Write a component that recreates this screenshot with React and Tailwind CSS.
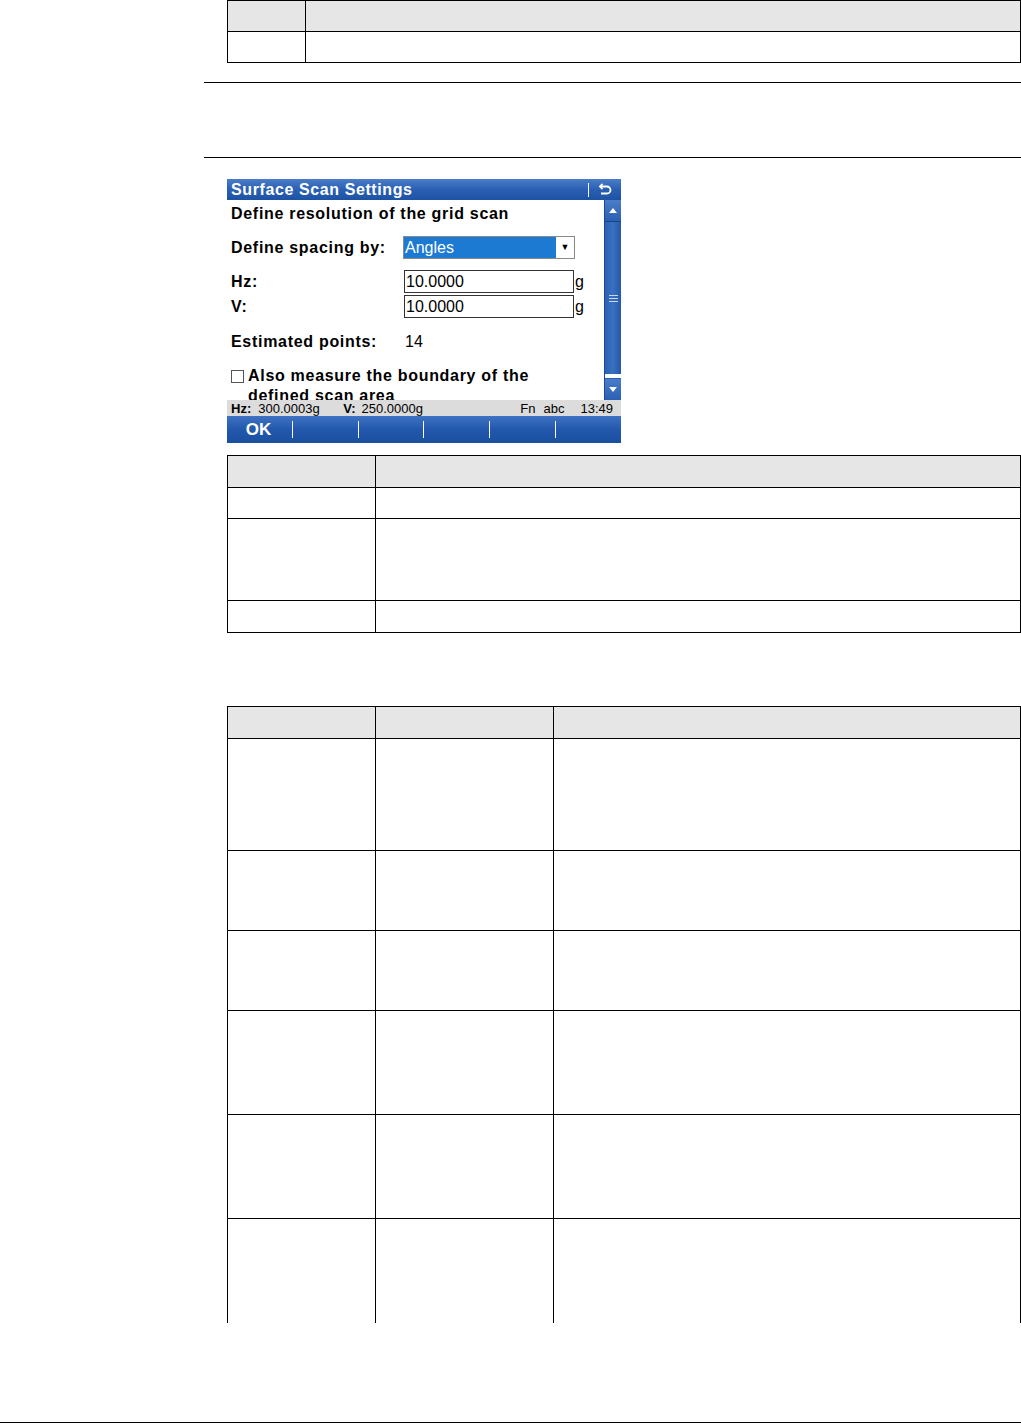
import React from "react";

const tahoma = { fontFamily: '"Liberation Sans", Arial, sans-serif' };

// a document table: left/top border on the box, right/bottom on every cell
const DocTable = ({ cols, rows, openBottom }) => (
  <div className="ml-[227px] w-[794px] border-l border-t border-black">
    {rows.map((h, i) => {
      const last = openBottom && i === rows.length - 1;
      return (
        <div key={i} className={`flex ${i === 0 ? "bg-[#e6e6e6]" : "bg-white"}`}>
          {cols.map((w, j) => (
            <div
              key={j}
              className={`border-r border-black ${last ? "" : "border-b"}`}
              style={{ width: w, height: h }}
            />
          ))}
        </div>
      );
    })}
  </div>
);

const Rule = () => <div className="ml-[204px] w-[817px] h-px bg-black" />;

const BackIcon = () => (
  <svg width="16" height="16" viewBox="0 0 16 16" fill="none">
    <path d="M3 4.5 H10 A3.5 3.5 0 0 1 10 11.5 H4" stroke="white" strokeWidth="1.8" />
    <path d="M5.5 2 L3 4.5 L5.5 7" stroke="white" strokeWidth="1.8" />
  </svg>
);

const Field = ({ value }) => (
  <div className="flex items-center">
    <div className="w-[170px] h-[23px] border border-[#333] flex items-center pl-px text-[16px] text-black leading-none">
      {value}
    </div>
    <span className="text-[16px] text-black ml-px leading-none">g</span>
  </div>
);

const Screen = () => (
  <div className="ml-[227px] w-[394px] h-[264px] flex flex-col overflow-hidden" style={tahoma}>
    {/* title bar */}
    <div className="h-[21px] flex items-center bg-gradient-to-b from-[#4a7cc8] via-[#2a60b3] to-[#1d52a3] pl-[4px] pr-[8px]">
      <span className="flex-1 text-white font-bold text-[16px] tracking-[0.6px] leading-none">
        Surface Scan Settings
      </span>
      <div className="w-px h-[14px] bg-white mr-[8px]" />
      <BackIcon />
    </div>

    {/* body + scrollbar */}
    <div className="h-[200px] flex">
      <div className="flex-1 bg-white overflow-hidden pl-[4px] flex flex-col">
        <div className="mt-[3px] h-[22px] flex items-center font-bold text-[16px] tracking-[0.7px] text-black">
          Define resolution of the grid scan
        </div>
        <div className="mt-[11px] h-[23px] flex items-center">
          <span className="w-[172px] font-bold text-[16px] tracking-[0.7px] text-black">Define spacing by:</span>
          <div className="w-[172px] h-[23px] border border-[#8a8a8a] flex">
            <div className="flex-1 bg-[#1c7ad3] text-white text-[16px] flex items-center pl-px">Angles</div>
            <div className="w-[18px] flex items-center justify-center text-[9px] text-black">▼</div>
          </div>
        </div>
        <div className="mt-[11px] h-[23px] flex items-center">
          <span className="w-[173px] font-bold text-[16px] tracking-[0.7px] text-black">Hz:</span>
          <Field value="10.0000" />
        </div>
        <div className="mt-[2px] h-[23px] flex items-center">
          <span className="w-[173px] font-bold text-[16px] tracking-[0.7px] text-black">V:</span>
          <Field value="10.0000" />
        </div>
        <div className="mt-[12px] h-[23px] flex items-center">
          <span className="w-[174px] font-bold text-[16px] tracking-[0.7px] text-black">Estimated points:</span>
          <span className="text-[16px] text-black">14</span>
        </div>
        <div className="mt-[13px] flex items-start">
          <div className="mt-[4px] w-[13px] h-[13px] border border-[#555] bg-white mr-[4px] shrink-0" />
          <div className="font-bold text-[16px] tracking-[0.7px] leading-[20px] text-black">
            Also measure the boundary of the
            <br />
            defined scan area
          </div>
        </div>
      </div>
      <div className="w-[17px] flex flex-col bg-[#2a62b6] border-l border-[#1c4a90]">
        <div className="h-[22px] flex items-center justify-center border-b border-[#1a4585] bg-gradient-to-b from-[#4a7cc8] to-[#2a60b3]">
          <div className="w-0 h-0 border-l-[4px] border-r-[4px] border-b-[5px] border-l-transparent border-r-transparent border-b-white" />
        </div>
        <div className="flex-1 flex flex-col items-center justify-center gap-[2px] bg-gradient-to-r from-[#2b62b5] via-[#3a70c0] to-[#2459aa]">
          <div className="w-[9px] h-px bg-[#c8d8f0]" />
          <div className="w-[9px] h-px bg-[#c8d8f0]" />
          <div className="w-[9px] h-px bg-[#c8d8f0]" />
        </div>
        <div className="h-[5px] bg-white border-b border-[#2a62b6]" />
        <div className="h-[21px] flex items-center justify-center bg-gradient-to-b from-[#4a7cc8] to-[#2a60b3]">
          <div className="w-0 h-0 border-l-[4px] border-r-[4px] border-t-[5px] border-l-transparent border-r-transparent border-t-white" />
        </div>
      </div>
    </div>

    {/* status bar */}
    <div className="h-[16px] bg-[#dcdcdc] flex items-center text-[13px] text-black leading-none pl-[4px]">
      <span className="font-bold">Hz:</span>
      <span className="ml-[7px] w-[85px]">300.0003g</span>
      <span className="font-bold">V:</span>
      <span className="ml-[6px] flex-1">250.0000g</span>
      <span>Fn</span>
      <span className="ml-[8px]">abc</span>
      <span className="ml-[16px] mr-[8px]">13:49</span>
    </div>

    {/* softkeys */}
    <div className="h-[27px] flex items-center bg-gradient-to-b from-[#3f72c2] via-[#2258ad] to-[#1a4f9f]">
      {["OK", "", "", "", "", ""].map((label, i) => (
        <React.Fragment key={i}>
          <div className="w-[65px] h-full flex items-center justify-center text-white font-bold text-[17px] leading-none pr-[2px]">
            {label}
          </div>
          {i < 5 && <div className="w-px h-[17px] bg-white" />}
        </React.Fragment>
      ))}
    </div>
  </div>
);

export default function App() {
  return (
    <div className="w-[1021px] h-[1424px] bg-white overflow-hidden">
      <DocTable cols={[78, 715]} rows={[31, 31]} />
      <div className="mt-[19px]">
        <Rule />
      </div>
      <div className="mt-[74px]">
        <Rule />
      </div>
      <div className="mt-[21px]">
        <Screen />
      </div>
      <div className="mt-[12px]">
        <DocTable cols={[148, 645]} rows={[32, 31, 82, 32]} />
      </div>
      <div className="mt-[73px]">
        <DocTable cols={[148, 178, 467]} rows={[32, 112, 80, 80, 104, 104, 104]} openBottom />
      </div>
      <div className="mt-[99px] w-full h-px bg-black" />
    </div>
  );
}
